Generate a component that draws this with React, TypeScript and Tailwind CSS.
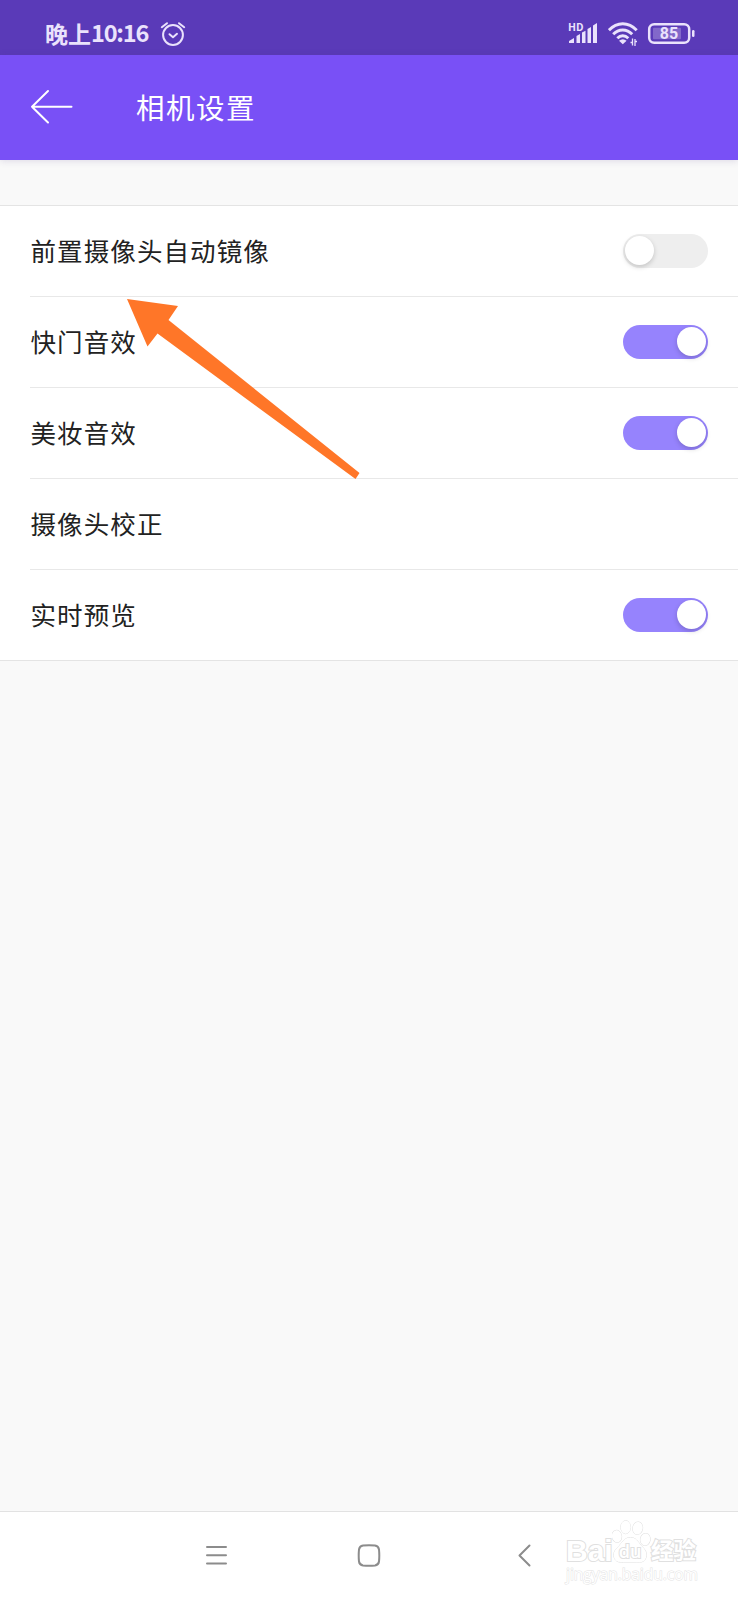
import clsx from "clsx";

const rows: { label: string; on?: boolean }[] = [
  { label: "前置摄像头自动镜像", on: false },
  { label: "快门音效", on: true },
  { label: "美妆音效", on: true },
  { label: "摄像头校正" },
  { label: "实时预览", on: true },
];

const Toggle = ({ on }: { on: boolean }) => (
  <button
    type="button"
    role="switch"
    aria-checked={on}
    className={clsx(
      "flex h-[34px] w-[85px] items-center rounded-full px-0.5 pb-px",
      on ? "justify-end bg-[#9683fd]" : "justify-start bg-[#eeeeee]"
    )}
  >
    <span className="size-[29px] rounded-full bg-white shadow-[0_2px_5px_rgba(0,0,0,0.18)]" />
  </button>
);

const StatusBar = () => (
  <div className="flex h-[55px] items-center justify-between bg-[#5a3ab8] pt-3 pr-[43px] pl-[45px] text-[#eae2fc]">
    <div className="flex items-center">
      <span className="text-[23px] leading-none font-bold">晚上</span>
      <span className="w-[58px] pb-px text-[23.5px] leading-none font-bold tracking-[-1.2px]">10:16</span>
      <svg className="ml-[11px]" width="26" height="26" viewBox="0 0 26 26" fill="none" stroke="currentColor" strokeWidth="2" strokeLinecap="round" strokeLinejoin="round">
        <circle cx="13" cy="14" r="9.9" />
        <path d="M1.8 6.2 7 2.2M24.2 6.2 19 2.2M9.5 13.2l3.5 3 4-3.4" />
      </svg>
    </div>

    <div className="flex items-center">
      <svg className="overflow-visible" width="30" height="24" viewBox="0 0 30 24" fill="currentColor">
        <text x="-1" y="8.5" fontSize="10.5" fontWeight="700" textLength="15.5" lengthAdjust="spacingAndGlyphs">HD</text>
        <path d="M0 21v-2l5-3v5zM7.5 21v-7l3.5-2v9zM13 21V10.5l3.5-1.8V21zM18.5 21V7L22 5v16zM24 21V3.500L28 1v20z" />
      </svg>
      <svg className="ml-[9px]" width="30" height="24" viewBox="0 0 30 24" fill="none" stroke="currentColor" strokeWidth="2.9">
        <path d="M.9 8.2C9-.5 20.5-.5 28.7 8.2M5.2 12.2c5.4-5.7 13.6-5.7 19 0M9.3 16.2c3.300-3.300 7.700-3.300 11 0" />
        <path d="M11 18.7q3.800-3 7.600 0l-3.800 3.600z" fill="currentColor" stroke="none" />
        <path d="M22.5 20.5h2v-4M24.5 16.5v7M27 17v7M27 19.5h2" strokeWidth="1.3" />
      </svg>
      <svg className="ml-[9px] overflow-visible" width="48" height="24" viewBox="0 0 48 24" fill="currentColor">
        <rect x="2.2" y="2.2" width="40" height="18.6" rx="5" fill="none" stroke="currentColor" strokeWidth="2.5" />
        <rect x="6" y="5.7" width="28" height="11.6" rx="1" opacity=".28" />
        <rect x="45" y="8" width="2.5" height="7" rx="1.2" />
        <text x="22" y="17.3" fontFamily="Roboto" fontSize="16" fontWeight="700" textAnchor="middle">85</text>
      </svg>
    </div>
  </div>
);

const Header = () => (
  <header className="flex h-[105px] items-center bg-[#7950f6] pl-[30px] text-white shadow-[0_1px_7px_rgba(60,40,120,0.15)]">
    <svg className="mb-0.5" width="43" height="36" viewBox="0 0 43 36" fill="none" stroke="currentColor" strokeWidth="2" strokeLinecap="round" strokeLinejoin="round">
      <path d="M41.5 17.8H2M18 2 2 17.8 18 33.5" />
    </svg>
    <h1 className="ml-[63px] text-[28.5px] leading-none tracking-[1.5px]">相机设置</h1>
  </header>
);

const Watermark = () => (
  <div className="absolute top-[7px] left-[566px] h-[80px] w-[140px] text-white [-webkit-text-stroke:2px_#e0e0e0] [paint-order:stroke_fill]">
    <div className="flex items-end pt-px">
      <span className="w-[46px] font-['Liberation_Sans'] text-[30px] leading-[29px] font-bold">Bai</span>
      <svg width="40" height="45" viewBox="0 0 40 45" fill="white" stroke="#e0e0e0">
        <ellipse cx="4.8" cy="16.3" rx="4.8" ry="6" transform="rotate(-10 4.8 16.3)" />
        <ellipse cx="13.7" cy="7.2" rx="4.9" ry="6.5" />
        <ellipse cx="25.7" cy="8.2" rx="4.9" ry="6.3" transform="rotate(10 25.7 8.2)" />
        <ellipse cx="33.3" cy="19.5" rx="4.9" ry="6" transform="rotate(10 33.3 19.5)" />
        <path d="M18.500 17.500c5 0 7 3.500 10.500 8 4 4 6.500 7 5 12-1.500 5-6 5-9.500 4.500h-13c-4 .5-8 0-9.500-5-1.200-5 2-8 5.500-11.500 3.500-4.500 6-8 11-8z" />
        <text x="18" y="38" fontFamily="Open Sans" fontSize="18" fontWeight="600" textAnchor="middle" strokeWidth="2">du</text>
      </svg>
      <span className="ml-[-1px] text-[22.5px] leading-[32px] font-bold">经验</span>
    </div>
    <div className="mt-[-2px] font-['Open_Sans'] text-[15.5px] leading-[22px] [-webkit-text-stroke:1px_#e4e4e4]">
      jingyan.baidu.com
    </div>
  </div>
);

const NavBar = () => (
  <nav className="relative flex h-[89px] border-t border-[#e2e2e2] bg-white pt-8 text-[#8c8c8c]">
    <svg className="ml-[205px]" width="23" height="24" viewBox="0 0 23 24" stroke="currentColor" strokeWidth="2" strokeLinecap="round">
      <path d="M2 3h19M2 11.2h19M2 19.4h19" />
    </svg>
    <svg className="ml-[129px]" width="24" height="24" viewBox="0 0 24 24" fill="none" stroke="currentColor" strokeWidth="2">
      <path d="M6 1.500Q12 .8 18 1.500 21.500 2 22 5.500q.6 6 0 12-.5 3.500-4 4-6 .6-12 0-3.500-.5-4-4-.6-6 0-12 .5-3.500 4-4z" />
    </svg>
    <svg className="ml-[136px]" width="14" height="24" viewBox="0 0 14 24" fill="none" stroke="currentColor" strokeWidth="2" strokeLinecap="round" strokeLinejoin="round">
      <path d="M12.5 1.5 2.5 11.5l10 10" />
    </svg>
    <Watermark />
  </nav>
);

// Orange pointer laid over the list, tip under the first row
const Pointer = () => (
  <svg className="pointer-events-none absolute top-[93px] left-[127px]" width="234" height="182" viewBox="0 0 234 182" fill="#ff7628">
    <path d="M0 0 51 7 41.5 21 232.5 174 228.5 180 30.5 34.5 20.5 47.5z" />
  </svg>
);

export default function App() {
  return (
    <main className="flex h-[1600px] w-[738px] flex-col overflow-hidden bg-[#f9f9f9] font-['Noto_Sans_CJK_SC',sans-serif]">
      <StatusBar />
      <Header />
      <section className="relative mt-[45px] border-y border-[#e4e4e4] bg-white">
        <ul>
          {rows.map(({ label, on }, i) => (
            <li
              key={label}
              className={clsx(
                "ml-[30px] flex items-center justify-between pr-[30px]",
                i < rows.length - 1 ? "h-[91px] border-b border-[#e8e8e8]" : "h-[90px]"
              )}
            >
              <span className="pb-0.5 pl-[0.5px] text-[25.5px] leading-none tracking-[1.1px] text-[#222222]">{label}</span>
              {on !== undefined && <Toggle on={on} />}
            </li>
          ))}
        </ul>
        <Pointer />
      </section>
      <div className="flex-1" />
      <NavBar />
    </main>
  );
}
